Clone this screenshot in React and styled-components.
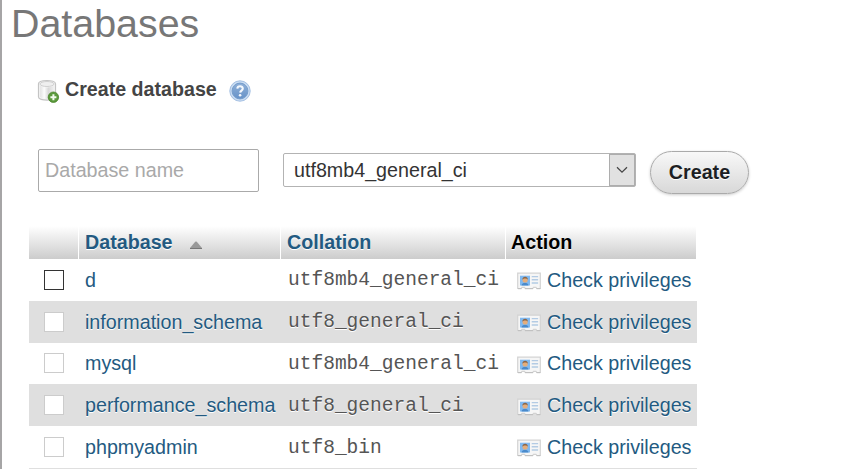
import React from 'react';
import styled, { createGlobalStyle } from 'styled-components';

const GlobalStyle = createGlobalStyle`
  * { box-sizing: border-box; }
  body {
    margin: 0;
    background: #fff;
    color: #444;
    font: 19.7px/1.2 "Liberation Sans", Arial, sans-serif;
    overflow: hidden;
  }
`;

const Page = styled.main`
  height: 469px;
  overflow: hidden;
  border-left: 2px solid #a6a5a6;
`;

const Title = styled.h1`
  margin: 0 0 0 9px;
  height: 75px;
  font-size: 39.4px;
  font-weight: 400;
  line-height: 47px;
  color: #777;
`;

const SectionTitle = styled.h2`
  margin: 0 0 0 35px;
  height: 30px;
  display: flex;
  align-items: flex-start;
  font-size: 19.65px;
  line-height: 29px;
  font-weight: 700;
  color: #444;

  svg { flex: none; margin-top: 5px; }
  svg:first-child { margin-top: 4px; }
  span { margin: 0 12px 0 5px; }
`;

const CreateForm = styled.form`
  display: flex;
  align-items: flex-start;
  margin: 44px 0 0 36px;
  height: 77px;
`;

const NameInput = styled.input`
  width: 221px;
  height: 43px;
  padding: 0 6px;
  border: 1px solid #aaa;
  border-radius: 2px;
  background: #fff;
  font: inherit;
  color: #444;
  outline: none;

  &::placeholder { color: #a9a9a9; opacity: 1; }
`;

const CollationSelect = styled.div`
  display: flex;
  width: 353px;
  height: 34px;
  margin: 4px 14px 0 24px;
  border: 1px solid #b3b3b3;
  border-radius: 2px;
  line-height: 33px;
  color: #333;

  span { flex: 1; padding-left: 10px; }
`;

const SelectArrow = styled.div`
  width: 26px;
  display: flex;
  align-items: center;
  justify-content: center;
  background: #e1e1e1;
  border: 1px solid #adadad;
`;

const CreateButton = styled.button`
  width: 99px;
  height: 43px;
  margin: 2px 0 0;
  padding: 0;
  border: 1px solid #aaa;
  border-radius: 22px;
  background: linear-gradient(#f8f8f8, #d8d8d8);
  box-shadow: 0 1px 3px rgba(0, 0, 0, 0.2);
  font: inherit;
  font-weight: 700;
  color: #1d1f24;
  text-shadow: 0 1px 0 #fff;
`;

const Table = styled.div`
  width: 668px;
  margin-left: 27px;
`;

const HeaderRow = styled.div`
  display: grid;
  grid-template-columns: 49px 201px 224px 190px;
  column-gap: 1px;
  height: 33px;
`;

const HeaderCell = styled.div`
  display: flex;
  align-items: center;
  padding-left: ${(p) => (p.$plain ? '5px' : '6px')};
  background: linear-gradient(#fff, #ccc);
  font-weight: 700;
  color: ${(p) => (p.$plain ? '#000' : '#235a81')};
  text-shadow: 0 1px 0 #fff;

  svg { margin: 5px 0 0 17px; }
`;

const Row = styled.div`
  display: grid;
  grid-template-columns: 50px 202px 225px 191px;
  height: 41.8px;
  background: ${(p) => (p.$shaded ? '#dfdfdf' : '#fff')};
  text-shadow: 0 1px 0 #fff;
`;

const Cell = styled.div`
  display: flex;
  align-items: center;
  padding-left: 6px;
  white-space: nowrap;
`;

const Checkbox = styled.span`
  width: 20px;
  height: 20px;
  margin-left: 9px;
  border: 1px solid ${(p) => (p.$enabled ? '#333' : '#ccc')};
  background: #fff;
`;

const Link = styled.a`
  padding-top: 1.5px;
  color: #235a81;
  text-decoration: none;
`;

const Collation = styled.span`
  font: 19.55px/40px "Liberation Mono", "Courier New", monospace;
  height: 39px;
  padding-left: 1px;
  color: #555;
`;

const PrivilegesLink = styled(Link)`
  display: flex;
  align-items: center;

  svg { margin: 1px 6px 0 5px; }
`;

const DatabaseAddIcon = () => (
  <svg width="23" height="24" viewBox="0 0 23 24">
    <defs>
      <linearGradient id="cyl" x2="1">
        <stop offset="0" stopColor="#e2e2e2" />
        <stop offset=".3" stopColor="#fcfcfc" />
        <stop offset=".6" stopColor="#d9d9d9" />
        <stop offset="1" stopColor="#eee" />
      </linearGradient>
    </defs>
    <path d="M1.5 4.8C1.5 0.4 18.5 0.4 18.5 4.8V18c0 4.2-17 4.2-17 0Z" fill="#f5f5f5" stroke="#c4c4c4" strokeWidth="1.2" />
    <path d="M3.2 6.5c2 2.6 11.6 2.6 13.6 0V18c-2 2.6-11.6 2.6-13.6 0Z" fill="url(#cyl)" />
    <ellipse cx="10" cy="5" rx="7" ry="2.5" fill="#efefef" stroke="#d0d0d0" />
    <circle cx="16.4" cy="18.2" r="5.2" fill="#5b9a3c" stroke="#498329" strokeWidth=".8" />
    <path d="M16.4 15.2v6M13.4 18.2h6" stroke="#f2faed" strokeWidth="2" />
  </svg>
);

const HelpIcon = () => (
  <svg width="22" height="22" viewBox="0 0 22 22">
    <defs>
      <linearGradient id="help" x2="0" y2="1">
        <stop offset="0" stopColor="#8fb0d8" />
        <stop offset="1" stopColor="#6692c8" />
      </linearGradient>
    </defs>
    <circle cx="11" cy="11" r="10.2" fill="#c9dcf2" stroke="#a3bfe2" />
    <circle cx="11" cy="11" r="7.9" fill="url(#help)" stroke="#759dcc" />
    <path d="M8.3 8.6c.2-3.2 5.6-3.1 5.5 0 0 2-2.5 2-2.6 4" fill="none" stroke="#f4f8fd" strokeWidth="2.1" />
    <circle cx="11.1" cy="15.2" r="1.3" fill="#f4f8fd" />
  </svg>
);

const PrivilegesIcon = () => (
  <svg width="24" height="18" viewBox="0 0 24 18">
    <path d="M.7 1.2h22.6v15.3h-3.6l-.7-1.2h-2.5l-.7 1.2H8.2l-.7-1.2H5l-.7 1.2H.7Z" fill="#f6f6f6" stroke="#d3d3d3" strokeWidth="1.2" />
    <path d="M1 16.7h3.5M8 16.7h8M19.6 16.7h3.7" stroke="#bdbdbd" />
    <rect x="3" y="3.7" width="10" height="9.8" fill="#80b9f0" />
    <path d="M4.5 13.5c.3-3.8 6.7-3.8 7 0Z" fill="#4a8acb" />
    <circle cx="8.1" cy="8" r="2.6" fill="#e4ad7b" />
    <path d="M5.4 7.8c-.4-4 5.8-4 5.4 0-.8-1.5-4.2-1.8-5.4 0Z" fill="#8a6547" />
    <path d="M14.7 4.6h6.4M14.7 7.8h6.4M14.7 11h6.4" stroke="#b3cbe4" strokeWidth="1.4" />
  </svg>
);

const SortIcon = () => (
  <svg width="12" height="8" viewBox="0 0 12 8">
    <path d="M0 7 5.2 .8Q6 .2 6.8 .8L12 7v1H0Z" fill="#999" />
    <path d="M0 7.5h12" stroke="#777" />
  </svg>
);

const ChevronIcon = () => (
  <svg width="12" height="8" viewBox="0 0 12 8">
    <path d="m1 1.3 5 4.9 5-4.9" fill="none" stroke="#444" strokeWidth="1.2" />
  </svg>
);

const databases = [
  { name: 'd', collation: 'utf8mb4_general_ci', removable: true },
  { name: 'information_schema', collation: 'utf8_general_ci' },
  { name: 'mysql', collation: 'utf8mb4_general_ci' },
  { name: 'performance_schema', collation: 'utf8_general_ci' },
  { name: 'phpmyadmin', collation: 'utf8_bin' },
];

export default function App() {
  return (
    <Page>
      <GlobalStyle />
      <Title>Databases</Title>
      <SectionTitle>
        <DatabaseAddIcon />
        <span>Create database</span>
        <HelpIcon />
      </SectionTitle>
      <CreateForm>
        <NameInput placeholder="Database name" />
        <CollationSelect>
          <span>utf8mb4_general_ci</span>
          <SelectArrow><ChevronIcon /></SelectArrow>
        </CollationSelect>
        <CreateButton type="button">Create</CreateButton>
      </CreateForm>
      <Table>
        <HeaderRow>
          <HeaderCell />
          <HeaderCell>Database<SortIcon /></HeaderCell>
          <HeaderCell>Collation</HeaderCell>
          <HeaderCell $plain>Action</HeaderCell>
        </HeaderRow>
        {databases.map((db, i) => (
          <Row key={db.name} $shaded={i % 2 === 1}>
            <Cell><Checkbox $enabled={db.removable} /></Cell>
            <Cell><Link>{db.name}</Link></Cell>
            <Cell><Collation>{db.collation}</Collation></Cell>
            <Cell>
              <PrivilegesLink><PrivilegesIcon />Check privileges</PrivilegesLink>
            </Cell>
          </Row>
        ))}
        <Row $shaded />
      </Table>
    </Page>
  );
}
